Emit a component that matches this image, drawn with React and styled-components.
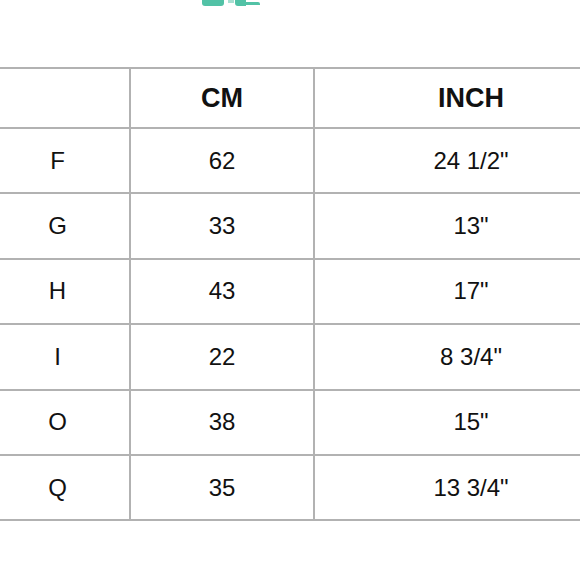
import React from 'react'
import styled, { createGlobalStyle } from 'styled-components'

const rows = [
  ['F', '62', '24 1/2"'],
  ['G', '33', '13"'],
  ['H', '43', '17"'],
  ['I', '22', '8 3/4"'],
  ['O', '38', '15"'],
  ['Q', '35', '13 3/4"'],
]

export default function App() {
  return (
    <>
      <GlobalStyle />
      <Page>
        <Logo width="580" height="10" viewBox="0 0 580 10">
          <path d="M202 0 H224 V3 Q224 6 221 6 H205 Q202 6 202 3 Z" fill="#52c2a6" />
          <path d="M235 0 H246 V2 H258 Q260 2 260 4 V5 H246 V6 H238 Q235 6 235 3 Z" fill="#52c2a6" />
          <path d="M228 0 H234 V3 H228 Z" fill="#52c2a6" opacity="0.5" />
        </Logo>
        <Table>
          <Row $height={60}>
            <Cell />
            <Cell $head>CM</Cell>
            <Cell $head>INCH</Cell>
          </Row>
          {rows.map((r, i) => (
            <Row key={r[0]} $height={65.4} $last={i === rows.length - 1}>
              <Cell>{r[0]}</Cell>
              <Cell>{r[1]}</Cell>
              <Cell>{r[2]}</Cell>
            </Row>
          ))}
        </Table>
      </Page>
    </>
  )
}

const GlobalStyle = createGlobalStyle`
  html, body { margin: 0; padding: 0; background: #fff; overflow: hidden; }
  body { font-family: "Liberation Sans", Arial, sans-serif; color: #111; }
`
const Page = styled.div`
  width: 580px;
  height: 580px;
  overflow: hidden;
  background: #fff;
`
const Logo = styled.svg`
  display: block;
  margin-bottom: 57px;
`
const Table = styled.div`
  width: 641px;
  margin-left: -14px;
`
const Row = styled.div`
  display: grid;
  grid-template-columns: 143px 184px 314px;
  box-sizing: border-box;
  height: ${p => p.$height + (p.$last ? 2 : 0)}px;
  border-top: 2px solid #b2b2b2;
  border-bottom: ${p => (p.$last ? '2px solid #b2b2b2' : 'none')};
  & > div + div {
    border-left: 2px solid #b2b2b2;
  }
`
const Cell = styled.div`
  display: flex;
  align-items: center;
  justify-content: center;
  font-size: ${p => (p.$head ? '27px' : '24px')};
  font-weight: ${p => (p.$head ? 700 : 400)};
  color: #111;
`
